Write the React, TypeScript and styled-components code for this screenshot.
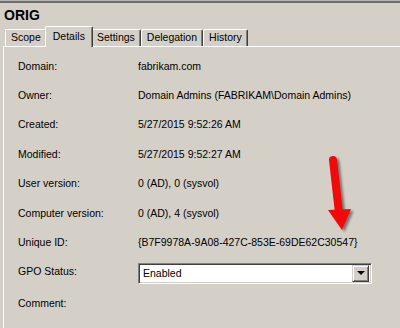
import React from "react";
import styled, { createGlobalStyle } from "styled-components";

const Global = createGlobalStyle`
  html, body {
    margin: 0;
    padding: 0;
    background: #d4d0c8;
  }
  body {
    font-family: "Liberation Sans", Arial, sans-serif;
    color: #000;
  }
`;

const Window = styled.div`
  position: relative;
  width: 400px;
  height: 328px;
  overflow: hidden;
  display: flex;
  flex-direction: column;
  background: #d4d0c8;
`;

const TopEdge = styled.div`
  height: 1px;
  border-bottom: 2px solid #6e6e6e;
  background: #b8b5ae;
`;

const Title = styled.div`
  height: 23px;
  padding-left: 4px;
  font-size: 14px;
  font-weight: bold;
  line-height: 24px;
`;

const TabStrip = styled.div`
  display: flex;
  align-items: flex-end;
  height: 20px;
  padding-left: 5px;
  position: relative;
  z-index: 1;
`;

const Tab = styled.div<{ $active?: boolean }>`
  box-sizing: border-box;
  height: ${(p) => (p.$active ? "21px" : "17px")};
  margin: ${(p) => (p.$active ? "0 -2px -1px -2px" : "0")};
  padding: ${(p) => (p.$active ? "1px 7px 0" : "0 5px")};
  border-top: 1px solid #fff;
  border-left: 1px solid #fff;
  border-right: 1px solid #404040;
  box-shadow: inset -1px 0 0 #808080;
  border-radius: 2px 2px 0 0;
  background: #d4d0c8;
  font-size: 10.5px;
  line-height: ${(p) => (p.$active ? "16px" : "15px")};
  white-space: nowrap;
  position: relative;
  z-index: ${(p) => (p.$active ? 2 : 1)};
`;

const Panel = styled.div`
  flex: 1;
  margin-left: 3px;
  border-top: 1px solid #fff;
  border-left: 1px solid #fff;
  padding: 4px 0 0 14px;
`;

const Grid = styled.div`
  display: grid;
  grid-template-columns: 120px 1fr;
  grid-auto-rows: 29.4px;
  align-items: center;
  font-size: 10.5px;
`;

const Label = styled.div<{ $shift?: number }>`
  white-space: nowrap;
  margin-top: ${(p) => p.$shift ?? 0}px;
`;

const Value = styled.div`
  white-space: nowrap;
`;

const Select = styled.div`
  box-sizing: border-box;
  width: 234px;
  height: 21px;
  margin-top: 4px;
  display: flex;
  align-items: center;
  background: #fff;
  border-top: 1px solid #808080;
  border-left: 1px solid #808080;
  border-right: 1px solid #fff;
  border-bottom: 1px solid #fff;
  box-shadow: inset 1px 1px 0 #404040, inset -1px -1px 0 #d4d0c8;
`;

const SelectText = styled.div`
  flex: 1;
  padding-left: 4px;
`;

const DropButton = styled.div`
  box-sizing: border-box;
  width: 17px;
  height: 17px;
  margin-right: 2px;
  display: flex;
  align-items: center;
  justify-content: center;
  background: #d4d0c8;
  border-top: 1px solid #d4d0c8;
  border-left: 1px solid #d4d0c8;
  border-right: 1px solid #404040;
  border-bottom: 1px solid #404040;
  box-shadow: inset 1px 1px 0 #fff, inset -1px -1px 0 #808080;
`;

const Caret = styled.div`
  width: 0;
  height: 0;
  border-left: 4px solid transparent;
  border-right: 4px solid transparent;
  border-top: 4px solid #000;
`;

const Annotation = styled.svg`
  position: absolute;
  left: 320px;
  top: 150px;
  width: 40px;
  height: 90px;
  z-index: 5;
`;

const rows: [string, string][] = [
  ["Domain:", "fabrikam.com"],
  ["Owner:", "Domain Admins (FABRIKAM\\Domain Admins)"],
  ["Created:", "5/27/2015 9:52:26 AM"],
  ["Modified:", "5/27/2015 9:52:27 AM"],
  ["User version:", "0 (AD), 0 (sysvol)"],
  ["Computer version:", "0 (AD), 4 (sysvol)"],
  ["Unique ID:", "{B7F9978A-9A08-427C-853E-69DE62C30547}"],
];

const tabs = ["Scope", "Details", "Settings", "Delegation", "History"];

export default function App() {
  return (
    <Window>
      <Global />
      <TopEdge />
      <Title>ORIG</Title>
      <TabStrip>
        {tabs.map((t) => (
          <Tab key={t} $active={t === "Details"}>
            {t}
          </Tab>
        ))}
      </TabStrip>
      <Panel>
        <Grid>
          {rows.map(([k, v]) => (
            <React.Fragment key={k}>
              <Label>{k}</Label>
              <Value>{v}</Value>
            </React.Fragment>
          ))}
          <Label>GPO Status:</Label>
          <Select>
            <SelectText>Enabled</SelectText>
            <DropButton>
              <Caret />
            </DropButton>
          </Select>
          <Label $shift={4}>Comment:</Label>
          <Value />
        </Grid>
      </Panel>
      <Annotation viewBox="0 0 40 90">
        <defs>
          <filter id="sh" x="-50%" y="-20%" width="200%" height="140%">
            <feGaussianBlur stdDeviation="1.2" />
          </filter>
        </defs>
        <g transform="translate(2.5,2)" fill="#3a2a2a" opacity="0.55" filter="url(#sh)">
          <line x1="13" y1="10" x2="19" y2="63" stroke="#3a2a2a" strokeWidth="8" strokeLinecap="round" />
          <polygon points="8,60 31,59 22,80" />
        </g>
        <line x1="13" y1="10" x2="19" y2="63" stroke="#f20a0a" strokeWidth="8" strokeLinecap="round" />
        <polygon points="8,60 31,59 22,80" fill="#f20a0a" />
      </Annotation>
    </Window>
  );
}
